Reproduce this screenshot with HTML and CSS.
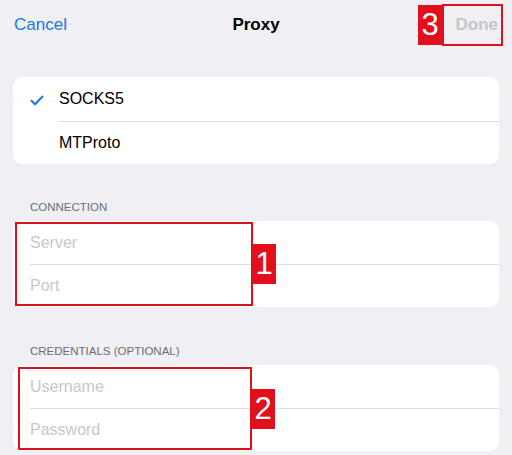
FILE: index.html
```html
<!DOCTYPE html>
<html>
<head>
<meta charset="utf-8">
<link rel="stylesheet" href="styles.css">
</head>
<body>
<div class="screen">
  <header class="nav">
    <span class="nav-btn cancel">Cancel</span>
    <span class="nav-title">Proxy</span>
    <span class="nav-btn done">Done</span>
  </header>

  <section class="card type-card">
    <div class="row type-row">
      <svg class="check" width="14" height="11" viewBox="0 0 14 11"><polyline points="1.5,5.8 5,9.2 12.5,1.5" fill="none" stroke="#1679e5" stroke-width="2.1" stroke-linecap="round" stroke-linejoin="round"/></svg>
      <span class="label">SOCKS5</span>
    </div>
    <div class="row type-row">
      <span class="label">MTProto</span>
    </div>
  </section>

  <div class="section-head first">CONNECTION</div>
  <section class="card field-card">
    <div class="row field">Server</div>
    <div class="row field">Port</div>
  </section>

  <div class="section-head second">CREDENTIALS (OPTIONAL)</div>
  <section class="card field-card">
    <div class="row field">Username</div>
    <div class="row field">Password</div>
  </section>

  <div class="mark box1"></div>
  <div class="badge badge1">1</div>
  <div class="mark box2"></div>
  <div class="badge badge2">2</div>
  <div class="mark box3"></div>
  <div class="badge badge3">3</div>
</div>
</body>
</html>
```

FILE: styles.css
```css
* { box-sizing: border-box; }
html, body {
  margin: 0;
  padding: 0;
  background: #efeff4;
}
body {
  font-family: "Liberation Sans", Arial, sans-serif;
  color: #000;
}
.screen {
  position: relative;
  width: 512px;
  height: 455px;
  overflow: hidden;
  padding: 0 13px;
}
.nav {
  height: 50px;
  display: flex;
  align-items: center;
  justify-content: space-between;
  padding: 0 1px 0 1px;
  margin: 0 -13px 0 0;
  position: relative;
}
.nav-btn {
  font-size: 17px;
}
.cancel { color: #1679e5; }
.done {
  color: #c6c6ca;
  font-weight: bold;
  margin-right: 13px;
}
.nav-title {
  position: absolute;
  left: 0;
  right: 13px;
  text-align: center;
  font-size: 17px;
  font-weight: bold;
  pointer-events: none;
}
.card {
  background: #fff;
  border-radius: 10px;
  overflow: hidden;
}
.type-card {
  margin-top: 27px;
}
.row {
  height: 43px;
  display: flex;
  align-items: center;
  position: relative;
}
.type-row { padding-left: 46px; font-size: 16px; }
.type-row:first-child { height: 44px; }
.type-row + .type-row::before,
.field + .field::before {
  content: "";
  position: absolute;
  top: 0;
  right: 0;
  height: 1px;
  background: #dedee2;
}
.type-row + .type-row::before { left: 45px; }
.field + .field::before { left: 17px; }
.check {
  position: absolute;
  left: 17px;
  top: 18px;
}
.field {
  padding-left: 17px;
  font-size: 16px;
  color: #c7c7cb;
}
.section-head {
  font-size: 11.5px;
  line-height: 14px;
  color: #6d6d72;
  padding: 36px 0 7px 17px;
}
.section-head.second { padding-top: 37px; }

.mark {
  position: absolute;
  border: 2px solid #dc111e;
}
.box1 { left: 15px; top: 222px; width: 238px; height: 84px; }
.box2 { left: 18px; top: 367px; width: 234px; height: 83px; }
.box3 { left: 442px; top: 4px; width: 61px; height: 42px; }
.badge {
  position: absolute;
  background: #e2101d;
  color: #fff;
  font-size: 31px;
  line-height: 40px;
  text-align: center;
  width: 24px;
  height: 40px;
}
.badge1 { left: 252px; top: 244px; }
.badge2 { left: 251px; top: 389px; }
.badge3 { left: 418px; top: 5px; }
```
